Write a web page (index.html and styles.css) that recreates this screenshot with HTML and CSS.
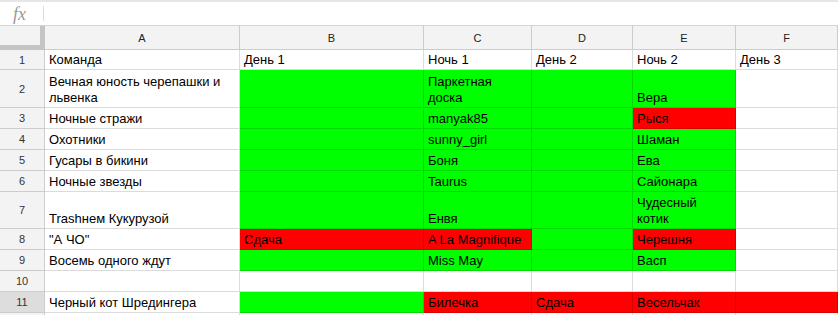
FILE: index.html
```html
<!DOCTYPE html>
<html lang="ru">
<head>
    <meta charset="UTF-8">
    <title>Таблица</title>
    <link rel="stylesheet" href="styles.css">
</head>
<body>

    <!-- Formula bar -->
    <div class="formula-bar">
        <span class="fx">fx</span>
        <span class="fx-sep"></span>
    </div>

    <!-- Sheet grid -->
    <div class="sheet">
        <!-- column headers -->
        <div class="corner"></div>
        <div class="col-head">A</div>
        <div class="col-head">B</div>
        <div class="col-head">C</div>
        <div class="col-head">D</div>
        <div class="col-head">E</div>
        <div class="col-head">F</div>

        <!-- 1 -->
        <div class="row-head">1</div>
        <div class="cell">Команда</div>
        <div class="cell">День 1</div>
        <div class="cell">Ночь 1</div>
        <div class="cell">День 2</div>
        <div class="cell">Ночь 2</div>
        <div class="cell">День 3</div>

        <!-- 2 -->
        <div class="row-head">2</div>
        <div class="cell">Вечная юность черепашки и<br>львенка</div>
        <div class="cell green"></div>
        <div class="cell green">Паркетная<br>доска</div>
        <div class="cell green"></div>
        <div class="cell green">Вера</div>
        <div class="cell"></div>

        <!-- 3 -->
        <div class="row-head">3</div>
        <div class="cell">Ночные стражи</div>
        <div class="cell green"></div>
        <div class="cell green">manyak85</div>
        <div class="cell green"></div>
        <div class="cell red">Рыся</div>
        <div class="cell"></div>

        <!-- 4 -->
        <div class="row-head">4</div>
        <div class="cell">Охотники</div>
        <div class="cell green"></div>
        <div class="cell green">sunny_girl</div>
        <div class="cell green"></div>
        <div class="cell green">Шаман</div>
        <div class="cell"></div>

        <!-- 5 -->
        <div class="row-head">5</div>
        <div class="cell">Гусары в бикини</div>
        <div class="cell green"></div>
        <div class="cell green">Боня</div>
        <div class="cell green"></div>
        <div class="cell green">Ева</div>
        <div class="cell"></div>

        <!-- 6 -->
        <div class="row-head">6</div>
        <div class="cell">Ночные звезды</div>
        <div class="cell green"></div>
        <div class="cell green">Taurus</div>
        <div class="cell green"></div>
        <div class="cell green">Сайонара</div>
        <div class="cell"></div>

        <!-- 7 -->
        <div class="row-head">7</div>
        <div class="cell">Trashнем Кукурузой</div>
        <div class="cell green"></div>
        <div class="cell green">Енвя</div>
        <div class="cell green"></div>
        <div class="cell green">Чудесный<br>котик</div>
        <div class="cell"></div>

        <!-- 8 -->
        <div class="row-head">8</div>
        <div class="cell">"А ЧО"</div>
        <div class="cell red">Сдача</div>
        <div class="cell red">A La Magnifique</div>
        <div class="cell green"></div>
        <div class="cell red">Черешня</div>
        <div class="cell"></div>

        <!-- 9 -->
        <div class="row-head">9</div>
        <div class="cell">Восемь одного ждут</div>
        <div class="cell green"></div>
        <div class="cell green">Miss May</div>
        <div class="cell green"></div>
        <div class="cell green">Васп</div>
        <div class="cell"></div>

        <!-- 10 -->
        <div class="row-head">10</div>
        <div class="cell"></div>
        <div class="cell"></div>
        <div class="cell"></div>
        <div class="cell"></div>
        <div class="cell"></div>
        <div class="cell"></div>

        <!-- 11 -->
        <div class="row-head selected">11</div>
        <div class="cell">Черный кот Шредингера</div>
        <div class="cell green"></div>
        <div class="cell red">Билечка</div>
        <div class="cell red">Сдача</div>
        <div class="cell red">Весельчак</div>
        <div class="cell red"></div>

        <!-- 12 (only its top edge is visible) -->
        <div class="row-head"></div>
        <div class="cell"></div>
        <div class="cell"></div>
        <div class="cell"></div>
        <div class="cell"></div>
        <div class="cell"></div>
        <div class="cell"></div>
    </div>

</body>
</html>
```

FILE: styles.css
```css
/* Page */
body {
    margin: 0;
    font-family: 'Liberation Sans', Arial, sans-serif;
    background: #fff;
    overflow: hidden;
}

/* Formula bar */
.formula-bar {
    height: 23px;
    border-top: 2px solid #e6e6e6;
    border-bottom: 1px solid #d4d4d4;
    display: flex;
    align-items: center;
}

.fx {
    font-family: 'Liberation Serif', serif;
    font-style: italic;
    font-size: 18px;
    color: #9a9a9a;
    width: 43px;
    padding-left: 13px;
    box-sizing: border-box;
    line-height: 18px;
}

.fx-sep {
    width: 1px;
    height: 15px;
    background: #dcdcdc;
}

/* Grid */
.sheet {
    display: grid;
    grid-template-columns: 45px 195px 184px 108px 101px 103px 1fr;
    grid-template-rows: 24px 20px 38px 21px 21px 21px 21px 37px 21px 21px 21px 21px 21px;
}

.corner {
    background: #f3f3f3;
    border-right: 5px solid #c4c4c4;
    border-bottom: 5px solid #c4c4c4;
}

.col-head {
    background: #f3f3f3;
    border-right: 1px solid #cccccc;
    border-bottom: 1px solid #cccccc;
    display: flex;
    align-items: center;
    justify-content: center;
    font-size: 11px;
    color: #222;
}

.row-head {
    background: #f3f3f3;
    border-right: 1px solid #cccccc;
    border-bottom: 1px solid #cccccc;
    display: flex;
    align-items: center;
    justify-content: center;
    font-size: 11px;
    color: #333;
}

.row-head.selected {
    background: #dddddd;
}

.cell {
    border-right: 1px solid rgba(0, 0, 0, 0.14);
    border-bottom: 1px solid rgba(0, 0, 0, 0.14);
    display: flex;
    align-items: flex-end;
    padding: 0 3px 1px 4px;
    font-size: 13px;
    line-height: 16px;
    color: #000;
    white-space: nowrap;
    overflow: hidden;
    min-width: 0;
}

/* Fill colours */
.green {
    background-color: #00ff00;
}

.red {
    background-color: #ff0000;
}
```
